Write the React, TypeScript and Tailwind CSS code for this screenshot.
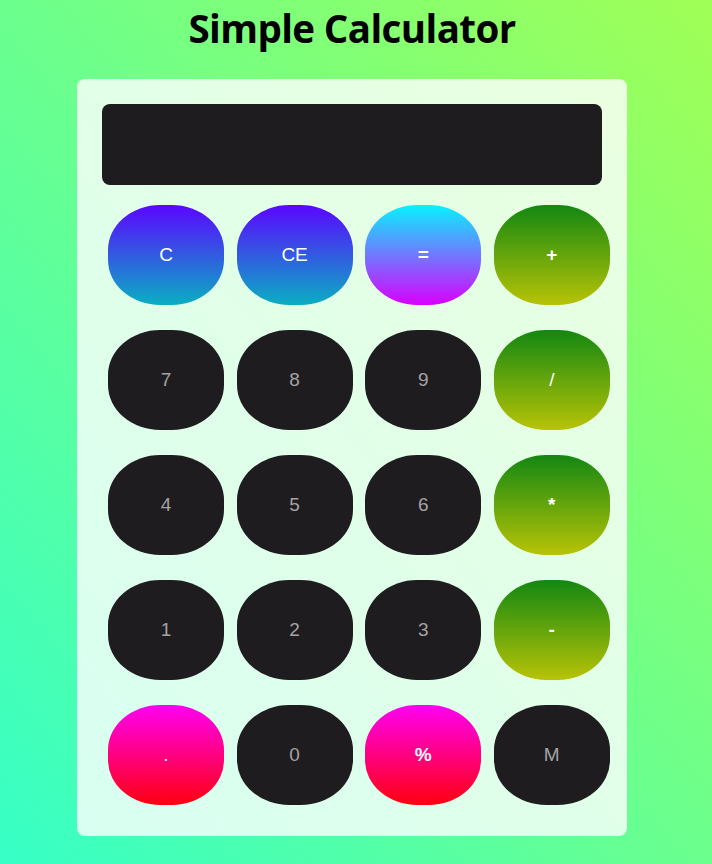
export default function App() {
  const blue = "bg-[linear-gradient(to_bottom,#5a06ff,#0aaec2)] text-white";
  const cyan = "bg-[linear-gradient(to_bottom,#08f2ff,#d900ff)] text-white font-bold";
  const green = "bg-[linear-gradient(to_bottom,#138711,#b8c306)] text-white font-bold";
  const greenThin = "bg-[linear-gradient(to_bottom,#138711,#b8c306)] text-white";
  const pink = "bg-[linear-gradient(to_bottom,#ff00f2,#ff0010)] text-white font-bold";
  const pinkThin = "bg-[linear-gradient(to_bottom,#ff00f2,#ff0010)] text-white";
  const dark = "bg-[#1e1c1f] text-[#a3a3a3]";

  const keys = [
    { label: "C", cls: blue },
    { label: "CE", cls: blue },
    { label: "=", cls: cyan },
    { label: "+", cls: green },
    { label: "7", cls: dark },
    { label: "8", cls: dark },
    { label: "9", cls: dark },
    { label: "/", cls: greenThin },
    { label: "4", cls: dark },
    { label: "5", cls: dark },
    { label: "6", cls: dark },
    { label: "*", cls: green },
    { label: "1", cls: dark },
    { label: "2", cls: dark },
    { label: "3", cls: dark },
    { label: "-", cls: green },
    { label: ".", cls: pinkThin },
    { label: "0", cls: dark },
    { label: "%", cls: pink },
    { label: "M", cls: dark },
  ];

  return (
    <main className="min-h-[864px] w-full bg-[linear-gradient(to_top_right,#36ffc6,#a0ff55)]">
      <div className="w-[704px] flex flex-col items-center">
        <h1 className="mt-[4px] text-[38.5px] leading-[48px] font-bold text-black font-['Open_Sans','Liberation_Sans',sans-serif] tracking-[-0.6px]">
          Simple Calculator
        </h1>

        <div className="mt-[27px] w-[550px] rounded-[8px] bg-white/80 p-[25px] pb-[31px]">
          <div className="h-[81px] w-[500px] rounded-[8px] bg-[#1e1c1f]" />

          <div className="mt-[20px] ml-[6px] grid grid-cols-[repeat(4,116px)] gap-x-[12.6px] gap-y-[25px]">
            {keys.map((k) => (
              <button
                key={k.label}
                className={`h-[100px] w-[116px] rounded-[45%] text-[19px] font-['Liberation_Sans',Arial,sans-serif] flex items-center justify-center ${k.cls}`}
              >
                {k.label}
              </button>
            ))}
          </div>
        </div>
      </div>
    </main>
  );
}
